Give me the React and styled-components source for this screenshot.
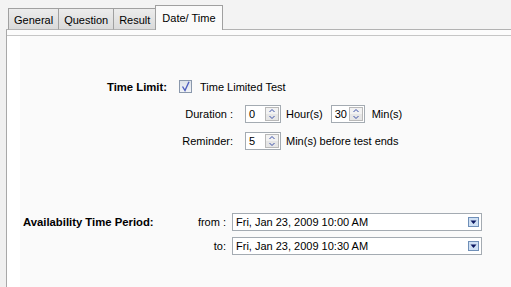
import React from 'react';
import styled, { createGlobalStyle } from 'styled-components';

const Global = createGlobalStyle`
  html, body { margin: 0; padding: 0; background: #f0f0f0; }
  body { font-family: "Liberation Sans", Arial, sans-serif; font-size: 11px; color: #000; }
`;

const Page = styled.div`
  width: 511px;
  height: 287px;
  overflow: hidden;
  background: #f0f0f0;
  display: flex;
  flex-direction: column;
`;

const TabBar = styled.div`
  height: 30px;
  flex: none;
  display: flex;
  align-items: flex-end;
  background: #f3f3f3;
  padding-left: 6px;
`;

const Lead = styled.div`
  width: ${p => p.$w || 2}px;
  flex: ${p => (p.$grow ? 1 : 'none')};
  border-bottom: 1px solid #b2b2b2;
`;

const Tab = styled.div`
  box-sizing: border-box;
  height: ${p => (p.$active ? 25 : 22)}px;
  padding: 0 ${p => (p.$active ? 6 : 5)}px;
  display: flex;
  align-items: center;
  margin-left: -1px;
  border: 1px solid #a0a0a0;
  border-bottom: ${p => (p.$active ? 'none' : '1px solid #b2b2b2')};
  background: ${p => (p.$active ? '#fafafa' : 'linear-gradient(#ececec, #dadada)')};
  color: #000;
  font-size: 11px;
  padding-top: ${p => (p.$active ? 0 : 1)}px;
`;

const Panel = styled.div`
  flex: 1;
  margin-left: 6px;
  border-left: 1px solid #a8a8a8;
  display: flex;
  flex-direction: column;
`;

const Strip = styled.div`
  height: 5px;
  flex: none;
  background: #fcfcfc;
  border-bottom: 1px solid #c6c6c6;
`;

const Body = styled.div`
  flex: 1;
  background: #fafafa;
  border-left: 13px solid #ffffff;
  padding-top: 42px;
`;

const TimeGrid = styled.div`
  display: grid;
  grid-template-columns: 147px 54px auto;
  grid-auto-rows: 18px;
  column-gap: 12px;
  row-gap: 9px;
  align-items: center;
  white-space: nowrap;
`;

const Label = styled.div`
  font-weight: ${p => (p.$bold ? 700 : 400)};
  text-align: ${p => (p.$left ? 'left' : 'right')};
  font-size: ${p => (p.$bold ? '11.3px' : '11px')};
  grid-column: ${p => p.$col || 'auto'};
`;

const Controls = styled.div`
  display: flex;
  align-items: center;
  gap: 5px;
  grid-column: ${p => p.$span || 'auto'};
`;

const Unit = styled.span`
  margin-left: ${p => p.$ml || 0}px;
`;

const Check = styled.span`
  width: 13px;
  height: 13px;
  box-sizing: border-box;
  border: 1px solid #8a98ac;
  background: linear-gradient(#dde2ea, #f2f4f7);
  display: inline-flex;
  margin-right: 3px;
  margin-top: -1px;
`;

const SpinBox = styled.div`
  box-sizing: border-box;
  width: ${p => p.$w || 36}px;
  height: 18px;
  margin-left: ${p => p.$ml || 0}px;
  border: 1px solid #a4abb2;
  background: #fff;
  display: flex;
  align-items: center;
  justify-content: space-between;
  padding: 0 1px 0 3px;
`;

const SpinButton = styled.span`
  display: inline-flex;
  width: 14px;
  height: 14px;
`;

const PeriodGrid = styled.div`
  display: grid;
  grid-template-columns: 140px 57px 250px;
  grid-auto-rows: 18px;
  column-gap: 6px;
  row-gap: 6px;
  align-items: center;
  padding-left: 3px;
  margin-top: 63px;
  white-space: nowrap;
`;

const Combo = styled.div`
  box-sizing: border-box;
  height: 18px;
  border: 1px solid #a4abb2;
  background: #fff;
  display: flex;
  align-items: center;
  justify-content: space-between;
  padding: 0 2px 0 3px;
`;

const Arrow = styled.span`
  display: inline-flex;
  width: 11px;
  height: 10px;
`;

const CheckIcon = () => (
  <svg width="11" height="11" viewBox="0 0 11 11">
    <path d="M2.5 5.5 L5 9.5 L9 0.8" fill="none" stroke="#4f5fc0" strokeWidth="1.4" />
  </svg>
);

const Spinner = ({ value, w, ml }) => (
  <SpinBox $w={w} $ml={ml}>
    <span>{value}</span>
    <SpinButton>
      <svg width="14" height="14" viewBox="0 0 14 14">
        <rect x="0.5" y="0.5" width="13" height="13" fill="#e6e6e6" stroke="#b9b9b9" />
        <rect x="1" y="1" width="12" height="6" fill="#f2f2f2" />
        <path d="M4.5 5 L7 2.5 L9.5 5" fill="none" stroke="#3a4fa8" strokeWidth="1" />
        <path d="M4.5 9 L7 11.5 L9.5 9" fill="none" stroke="#3a4fa8" strokeWidth="1" />
      </svg>
    </SpinButton>
  </SpinBox>
);

const DateCombo = ({ value }) => (
  <Combo>
    <span>{value}</span>
    <Arrow>
      <svg width="11" height="10" viewBox="0 0 11 10">
        <rect x="0.5" y="0.5" width="10" height="9" fill="#cfe0f4" stroke="#6f8fb8" />
        <path d="M2.5 3.5 L8.5 3.5 L5.5 7 Z" fill="#0b1660" />
      </svg>
    </Arrow>
  </Combo>
);

const App = () => (
  <>
    <Global />
    <Page>
      <TabBar>
        <Lead $w={3} />
        <Tab>General</Tab>
        <Tab>Question</Tab>
        <Tab>Result</Tab>
        <Tab $active>Date/ Time</Tab>
        <Lead $grow />
      </TabBar>
      <Panel>
        <Strip />
        <Body>
          <TimeGrid>
            <Label $bold>Time Limit:</Label>
            <Controls $span="2 / 4">
              <Check><CheckIcon /></Check>
              <span>Time Limited Test</span>
            </Controls>

            <Label $col="2">Duration :</Label>
            <Controls>
              <Spinner value="0" />
              <Unit>Hour(s)</Unit>
              <Spinner value="30" w={34} ml={3} />
              <Unit $ml={2}>Min(s)</Unit>
            </Controls>

            <Label $col="2">Reminder:</Label>
            <Controls>
              <Spinner value="5" />
              <Unit>Min(s) before test ends</Unit>
            </Controls>
          </TimeGrid>

          <PeriodGrid>
            <Label $bold $left>Availability Time Period:</Label>
            <Label>from :</Label>
            <DateCombo value="Fri, Jan 23, 2009 10:00 AM" />

            <Label $col="2">to:</Label>
            <DateCombo value="Fri, Jan 23, 2009 10:30 AM" />
          </PeriodGrid>
        </Body>
      </Panel>
    </Page>
  </>
);

export default App;
